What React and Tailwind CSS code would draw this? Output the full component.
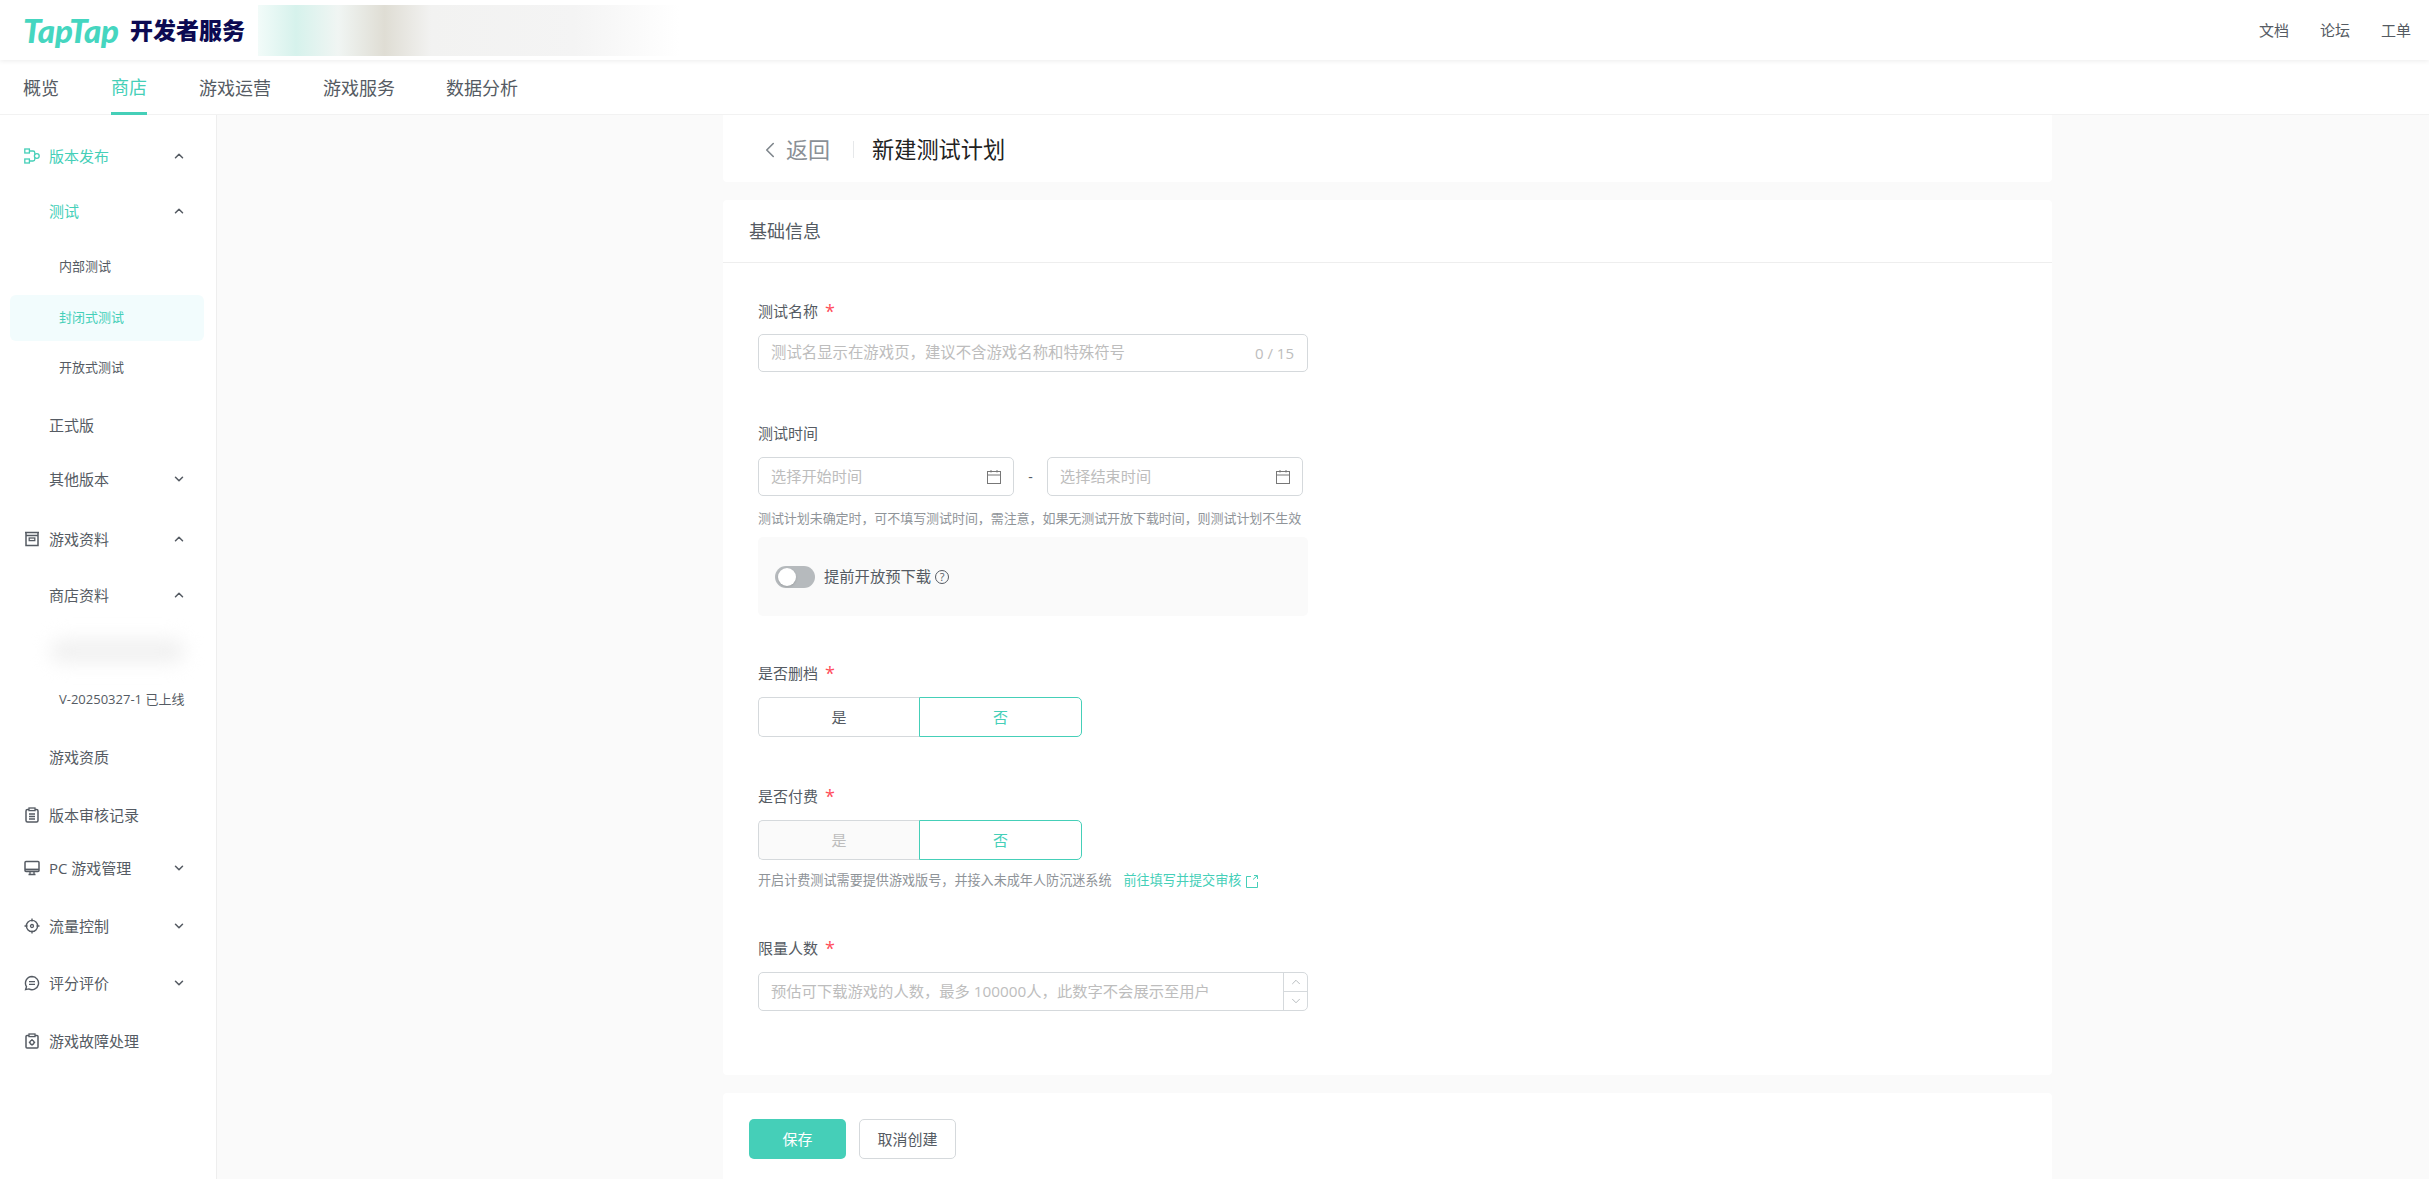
import React from 'react'
import { ChevronUp, ChevronDown, ChevronLeft } from 'lucide-react'

function Icon({ children }) {
  return (
    <svg width="16" height="16" viewBox="0 0 16 16" fill="none" stroke="currentColor" strokeWidth="1.3" className="shrink-0">
      {children}
    </svg>
  )
}

const IconRelease = () => (
  <Icon>
    <rect x="0.8" y="1" width="4.6" height="4" />
    <rect x="0.8" y="11" width="4.6" height="4" />
    <circle cx="12.8" cy="8" r="2.4" />
    <path d="M5.4 3h3.6q1.8 0 1.8 1.8v1.6M5.4 13h3.6q1.8 0 1.8-1.8V9.6" />
  </Icon>
)
const IconArchive = () => (
  <Icon>
    <path d="M1 1.5h14M2 1.5v13h12v-13M2 4.5h12" strokeWidth="1.5" />
    <rect x="5.2" y="7" width="5.6" height="2.6" />
  </Icon>
)
const IconRecord = () => (
  <Icon>
    <rect x="2" y="2.5" width="12" height="12.5" rx="1.5" strokeWidth="1.5" />
    <rect x="5" y="1" width="6" height="2.6" fill="#fff" />
    <path d="M5 7h6M5 9.5h6M5 12h6" />
  </Icon>
)
const IconMonitor = () => (
  <Icon>
    <rect x="1" y="1.5" width="14" height="10" rx="1" strokeWidth="1.5" />
    <path d="M1 9.5h14" strokeWidth="1.8" />
    <path d="M6 11.5v2.5M10 11.5v2.5M4.5 14.5h7" />
  </Icon>
)
const IconTarget = () => (
  <Icon>
    <circle cx="8" cy="8" r="5.6" strokeWidth="1.4" />
    <circle cx="8" cy="8" r="1.5" />
    <path d="M8 0.5v3M8 12.5v3M0.5 8h3M12.5 8h3" />
  </Icon>
)
const IconComment = () => (
  <Icon>
    <path d="M8 1.5a6.6 6.6 0 1 1-3.2 12.4L1.6 14.6l.9-3A6.6 6.6 0 0 1 8 1.5z" strokeWidth="1.4" />
    <path d="M5 6.6h6M5 9.4h6" />
  </Icon>
)
const IconFault = () => (
  <Icon>
    <rect x="2" y="2.5" width="12" height="12.5" rx="1" strokeWidth="1.5" />
    <rect x="5" y="1" width="6" height="2.6" fill="#fff" />
    <circle cx="8" cy="9.4" r="2" />
    <path d="M8 6v1.2M8 11.6v1.2M4.8 9.4H6M10 9.4h1.2" />
  </Icon>
)
const IconCalendar = () => (
  <svg width="14" height="14" viewBox="0 0 14 14" fill="none" stroke="#777" strokeWidth="1" className="shrink-0">
    <rect x="0.5" y="1.5" width="13" height="12" />
    <path d="M0.5 5h13M4 0v2.5M10 0v2.5" />
  </svg>
)

const up = 'up'
const down = 'down'
const menu = [
  { label: '版本发布', icon: <IconRelease />, arrow: up, active: true, className: 'mt-[18px]', indent: 'pl-[24px]' },
  { label: '测试', arrow: up, active: true, className: 'mt-[9px]', indent: 'pl-[49px]' },
  { label: '内部测试', small: true, className: 'mt-[10px]', indent: 'pl-[59px]' },
  { label: '封闭式测试', small: true, active: true, selected: true, className: 'mt-[5px]', indent: 'pl-[49px]' },
  { label: '开放式测试', small: true, className: 'mt-[4px]', indent: 'pl-[59px]' },
  { label: '正式版', className: 'mt-[11px]', indent: 'pl-[49px]' },
  { label: '其他版本', arrow: down, className: 'mt-[8px]', indent: 'pl-[49px]' },
  { label: '游戏资料', icon: <IconArchive />, arrow: up, className: 'mt-[14px]', indent: 'pl-[24px]' },
  { label: '商店资料', arrow: up, className: 'mt-[10px]', indent: 'pl-[49px]' },
  { blur: true, className: 'mt-[10px]' },
  { label: 'V-20250327-1 已上线', small: true, className: 'mt-[3px]', indent: 'pl-[59px]' },
  { label: '游戏资质', className: 'mt-[11px]', indent: 'pl-[49px]' },
  { label: '版本审核记录', icon: <IconRecord />, className: 'mt-[12px]', indent: 'pl-[24px]' },
  { label: 'PC 游戏管理', icon: <IconMonitor />, arrow: down, className: 'mt-[7px]', indent: 'pl-[24px]' },
  { label: '流量控制', icon: <IconTarget />, arrow: down, className: 'mt-[12px]', indent: 'pl-[24px]' },
  { label: '评分评价', icon: <IconComment />, arrow: down, className: 'mt-[11px]', indent: 'pl-[24px]' },
  { label: '游戏故障处理', icon: <IconFault />, className: 'mt-[12px]', indent: 'pl-[24px]' },
]

function Sidebar() {
  return (
    <aside className="w-[217px] shrink-0 bg-white border-r border-[#eeeeee]">
      {menu.map((item, i) => {
        if (item.blur) {
          return (
            <div key={i} className={`h-[46px] flex items-center pl-[50px] ${item.className}`}>
              <div className="w-[135px] h-[24px] rounded-full bg-[#f1f1f1] blur-[9px]"></div>
            </div>
          )
        }
        return (
          <div
            key={i}
            className={`h-[46px] flex items-center ${item.className} ${item.active ? 'text-[#45cfb8]' : 'text-[#555b63]'} ${item.selected ? 'bg-[#f2fcfd] rounded-[6px] ml-[10px] w-[194px]' : ''} ${item.indent}`}
          >
            {item.icon && <span className="mr-[9px] flex">{item.icon}</span>}
            <span className={`whitespace-nowrap ${item.small ? 'text-[13px]' : 'text-[15px]'}`}>{item.label}</span>
            {item.arrow === up && <ChevronUp size={14} strokeWidth={2.6} className="ml-auto mr-[30px] text-[#555b63]" />}
            {item.arrow === down && <ChevronDown size={14} strokeWidth={2.6} className="ml-auto mr-[30px] text-[#555b63]" />}
          </div>
        )
      })}
    </aside>
  )
}

function Label({ children, required }) {
  return (
    <div className="h-[22px] flex items-center text-[15px] leading-[22px] text-[#555b63]">
      {children}
      {required && <span className="ml-[7px] text-[#ff4d5a] text-[18px] leading-[22px]">*</span>}
    </div>
  )
}

function Segment({ disabled }) {
  return (
    <div className="mt-[13px] flex w-[324px] h-[40px] text-[15px]">
      <div className={`w-[161px] flex items-center justify-center rounded-l-[5px] border border-r-0 border-[#d5d9dc] ${disabled ? 'bg-[#fafafa] text-[#bdbdbd]' : 'bg-white text-[#555b63]'}`}>是</div>
      <div className="w-[163px] flex items-center justify-center rounded-r-[5px] border border-[#45cfb8] text-[#45cfb8]">否</div>
    </div>
  )
}

function DateBox({ placeholder }) {
  return (
    <div className="w-[256px] h-[39px] flex items-center justify-between pl-[12px] pr-[12px] rounded-[5px] border border-[#d5d9dc] text-[15.2px] text-[#bdbdbd]">
      {placeholder}
      <IconCalendar />
    </div>
  )
}

export default function App() {
  return (
    <div lang="zh-CN" className="h-screen overflow-hidden flex flex-col bg-[#fafafa] font-['Open_Sans','Noto_Sans_CJK_SC',sans-serif]">
      {/* top bar */}
      <header className="relative z-10 h-[60px] shrink-0 bg-white flex items-center pl-[23px] pr-[18px] shadow-[0_1px_5px_rgba(0,0,0,0.08)]">
        <span className="w-[107px] font-['Lato'] font-black italic text-[33px] leading-none tracking-[-0.2px] text-[#45d6c0]">TapTap</span>
        <span className="text-[23px] leading-none font-black text-[#0c0a52] whitespace-nowrap">开发者服务</span>
        <div className="ml-[13px] w-[422px] h-[51px] bg-[linear-gradient(90deg,#f2fbf9_0%,#d6f2ec_9%,#f0f5f3_19%,#dfddd4_30%,#f2f2f1_41%,#f4f4f4_75%,#ffffff_100%)]"></div>
        <nav className="ml-auto flex gap-[31px] text-[15px] text-[#555b63]">
          <span>文档</span>
          <span>论坛</span>
          <span>工单</span>
        </nav>
      </header>

      {/* tabs */}
      <div className="h-[55px] shrink-0 bg-white border-b border-[#f2f2f2] flex pl-[23px] gap-[52px] text-[18px] text-[#555b63]">
        <div className="flex items-center pt-[2px]">概览</div>
        <div className="flex items-center text-[#45cfb8] border-b-[3px] border-[#45cfb8] pt-[3px] h-[55px]">商店</div>
        <div className="flex items-center pt-[2px]">游戏运营</div>
        <div className="flex items-center pt-[2px]">游戏服务</div>
        <div className="flex items-center pt-[2px] -ml-[1px]">数据分析</div>
      </div>

      <div className="flex flex-1 min-h-0">
        <Sidebar />
        <main className="flex-1 pl-[506px]">
          <div className="w-[1329px]">
            {/* page title */}
            <div className="h-[67px] bg-white rounded-b-[4px] flex items-center pl-[38px] pt-[2px]">
              <ChevronLeft size={26} strokeWidth={1.5} className="text-[#7f868c] -ml-[4px]" />
              <span className="ml-[3px] text-[22px] text-[#8a9096]">返回</span>
              <span className="ml-[23px] w-px h-[17px] bg-[#e6e8ea]"></span>
              <span className="ml-[18px] text-[22.2px] text-[#222222]">新建测试计划</span>
            </div>

            {/* basic info */}
            <section className="mt-[18px] bg-white rounded-[4px] pb-[64px]">
              <div className="h-[63px] flex items-center pl-[26px] border-b border-[#eeeeee] text-[18px] text-[#555b63]">基础信息</div>
              <div className="pl-[35px]">
                <div className="pt-[37px]"><Label required>测试名称</Label></div>
                <div className="mt-[12px] w-[550px] h-[38px] flex items-center justify-between px-[12px] rounded-[5px] border border-[#d5d9dc] text-[15.4px] text-[#bdbdbd]">
                  <span>测试名显示在游戏页，建议不含游戏名称和特殊符号</span>
                  <span className="text-[15px] mr-[1px]">0 / 15</span>
                </div>

                <div className="mt-[50px]"><Label>测试时间</Label></div>
                <div className="mt-[13px] flex items-center">
                  <DateBox placeholder="选择开始时间" />
                  <span className="w-[33px] text-center text-[14px] text-[#555b63]">-</span>
                  <DateBox placeholder="选择结束时间" />
                </div>
                <p className="mt-[12px] h-[20px] text-[13px] tracking-[-0.07px] leading-[20px] text-[#8f9499] whitespace-nowrap">测试计划未确定时，可不填写测试时间，需注意，如果无测试开放下载时间，则测试计划不生效</p>
                <div className="mt-[9px] w-[550px] h-[79px] rounded-[5px] bg-[#fafafa] flex items-center pl-[17px]">
                  <div className="w-[40px] h-[22px] rounded-full bg-[#b6babd] flex items-center pl-[3px]">
                    <div className="w-[18px] h-[18px] rounded-full bg-white shadow"></div>
                  </div>
                  <span className="ml-[9px] text-[15.3px] text-[#555b63]">提前开放预下载</span>
                  <span className="ml-[4px] w-[14px] h-[14px] rounded-full border border-[#555b63] flex items-center justify-center text-[11px] leading-none text-[#555b63]">?</span>
                </div>

                <div className="mt-[46px]"><Label required>是否删档</Label></div>
                <Segment />

                <div className="mt-[48px]"><Label required>是否付费</Label></div>
                <Segment disabled />
                <div className="mt-[11px] h-[20px] flex items-center text-[13.1px] text-[#8f9499] whitespace-nowrap">
                  <span>开启计费测试需要提供游戏版号，并接入未成年人防沉迷系统</span>
                  <span className="ml-[12px] text-[#45cfb8]">前往填写并提交审核</span>
                  <svg width="12" height="13" viewBox="0 0 12 13" fill="none" stroke="#45cfb8" strokeWidth="1" className="ml-[5px]">
                    <path d="M5 1.5H0.5v11h11V7M7 4.5l4-3.5M8 0.5h3.5V4" />
                  </svg>
                </div>

                <div className="mt-[46px]"><Label required>限量人数</Label></div>
                <div className="mt-[13px] w-[550px] h-[39px] flex items-center rounded-[5px] border border-[#d5d9dc] text-[15.3px] text-[#bdbdbd]">
                  <span className="flex-1 pl-[12px]">预估可下载游戏的人数，最多 100000人，此数字不会展示至用户</span>
                  <div className="w-[24px] h-full border-l border-[#d5d9dc] flex flex-col text-[#9aa0a5]">
                    <div className="flex-1 flex items-center justify-center border-b border-[#d5d9dc]"><ChevronUp size={14} strokeWidth={1.2} /></div>
                    <div className="flex-1 flex items-center justify-center"><ChevronDown size={14} strokeWidth={1.2} /></div>
                  </div>
                </div>
              </div>
            </section>

            {/* actions */}
            <div className="mt-[18px] h-[86px] bg-white rounded-t-[4px] flex items-start gap-[13px] pl-[26px] pt-[26px] text-[15px]">
              <button className="w-[97px] h-[40px] rounded-[5px] bg-[#45cfb8] text-white">保存</button>
              <button className="w-[97px] h-[40px] rounded-[5px] border border-[#d5d9dc] bg-white text-[#555b63]">取消创建</button>
            </div>
          </div>
        </main>
      </div>
    </div>
  )
}
